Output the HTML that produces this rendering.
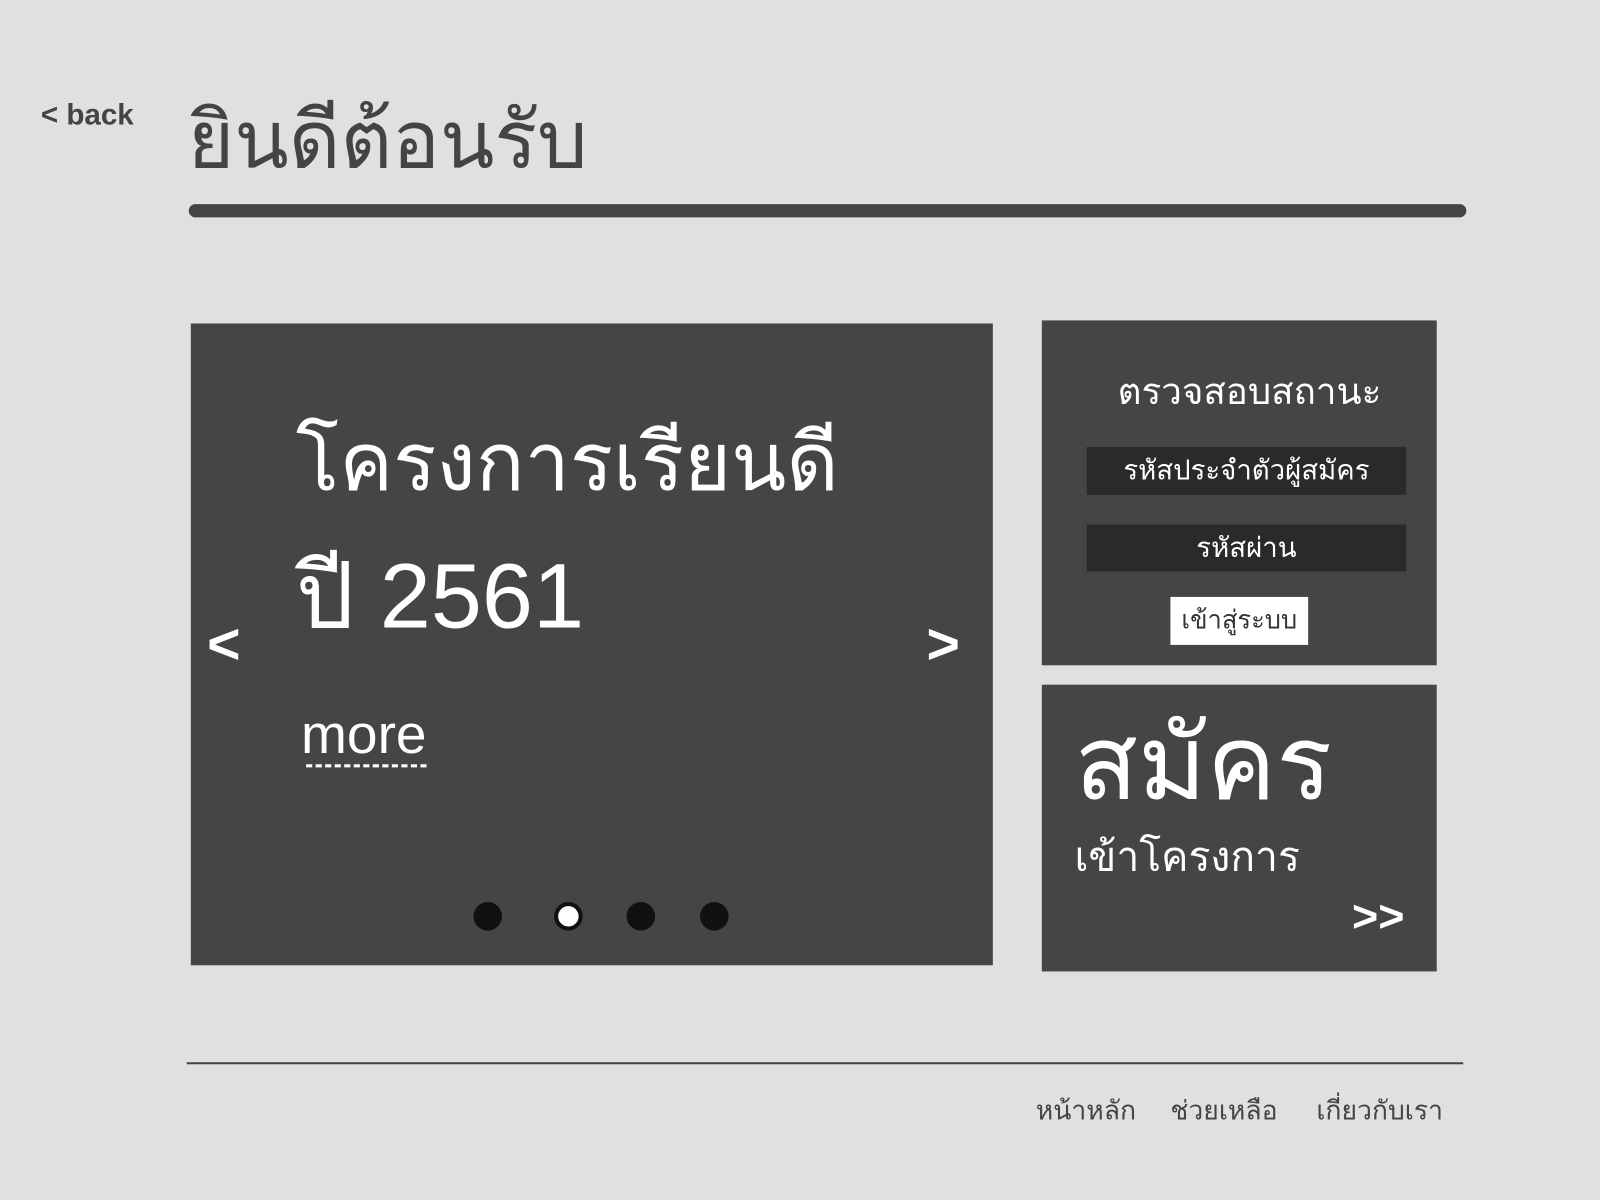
<!DOCTYPE html>
<html><head><meta charset="utf-8"><style>
body{margin:0;width:1600px;height:1200px;background:#e0e0e0;overflow:hidden;font-family:"Liberation Sans","DejaVu Sans","Noto Sans CJK SC",sans-serif;color:#444}
#c{position:absolute;left:0;top:0;width:1568px;height:1176px;transform:scale(1.0204);transform-origin:0 0}
.a{position:absolute;white-space:nowrap}
.w{color:#fff}
.dot{position:absolute;width:28px;height:28px;border-radius:50%;background:#111;top:884px}
</style></head><body><div id="c">
<div class="a" style="left:40px;top:97px;font-size:29px;font-weight:bold">&lt; back</div>
<div class="a" style="left:184px;top:87px;font-size:78px;line-height:100px">ยินดีต้อนรับ</div>
<div class="a" style="left:185px;top:200px;width:1252px;height:13px;border-radius:7px;background:#444"></div>

<div class="a" style="left:187px;top:317px;width:786px;height:629px;background:#454545"></div>
<div class="a w" style="left:290px;top:398px;font-size:79px;line-height:110px">โครงการเรียนดี</div>
<div class="a w" style="left:290px;top:530px;font-size:90px;line-height:110px">ปี 2561</div>
<div class="a w" style="left:203px;top:598px;font-size:56px;font-weight:bold">&lt;</div>
<div class="a w" style="left:908px;top:598px;font-size:56px;font-weight:bold">&gt;</div>
<div class="a w" style="left:295px;top:690px;font-size:54px;line-height:60px">more</div>
<div class="a" style="left:300px;top:749px;width:118px;border-top:3px dashed #fff"></div>
<div class="dot" style="left:464px"></div>
<div class="dot" style="left:543px;background:#fff;border:4px solid #111;width:20px;height:20px"></div>
<div class="dot" style="left:614px"></div>
<div class="dot" style="left:686px"></div>

<div class="a" style="left:1021px;top:314px;width:387px;height:338px;background:#454545"></div>
<div class="a w" style="left:1031px;width:387px;text-align:center;top:360px;font-size:36px;line-height:48px">ตรวจสอบสถานะ</div>
<div class="a w" style="left:1065px;top:438px;width:313px;height:47px;background:#2a2a2a;text-align:center;font-size:27px;line-height:47px">รหัสประจำตัวผู้สมัคร</div>
<div class="a w" style="left:1065px;top:514px;width:313px;height:46px;background:#2a2a2a;text-align:center;font-size:27px;line-height:46px">รหัสผ่าน</div>
<div class="a" style="left:1147px;top:585px;width:135px;height:47px;background:#fff;color:#333;text-align:center;font-size:25px;line-height:47px">เข้าสู่ระบบ</div>

<div class="a" style="left:1021px;top:671px;width:387px;height:281px;background:#454545"></div>
<div class="a w" style="left:1053px;top:688px;font-size:102px;line-height:120px">สมัคร</div>
<div class="a w" style="left:1053px;top:812px;font-size:40px;line-height:56px">เข้าโครงการ</div>
<div class="a w" style="left:1325px;top:874px;font-size:44px;font-weight:bold">&gt;&gt;</div>

<div class="a" style="left:183px;top:1041px;width:1251px;height:2px;background:#444"></div>
<div class="a" style="left:1015px;top:1068px;font-size:26px">หน้าหลัก</div>
<div class="a" style="left:1147px;top:1068px;font-size:26px">ช่วยเหลือ</div>
<div class="a" style="left:1290px;top:1068px;font-size:26px">เกี่ยวกับเรา</div>
</div></body></html>
